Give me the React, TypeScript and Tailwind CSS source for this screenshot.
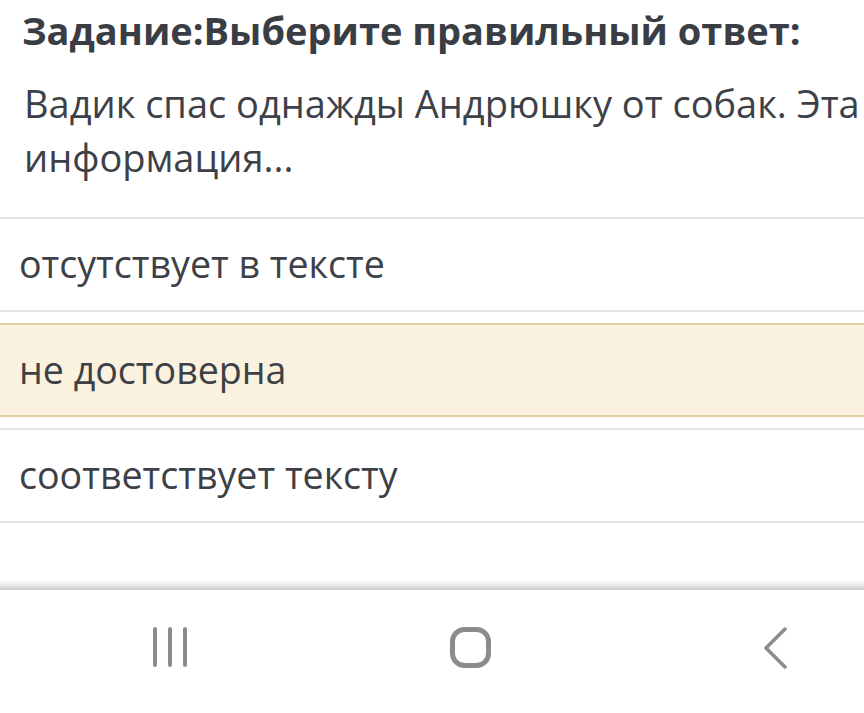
const OPTIONS = [
  { text: "отсутствует в тексте", selected: false },
  { text: "не достоверна", selected: true },
  { text: "соответствует тексту", selected: false },
];

export default function App() {
  return (
    <div className="flex h-[713px] w-[864px] flex-col overflow-hidden bg-white font-['Open_Sans',sans-serif] text-[#3d4147]">
      <div className="px-[22px] pt-[3px]">
        <h1 className="whitespace-nowrap text-[38px] font-bold leading-[54px] text-[#3a3e44]">
          Задание:Выберите правильный ответ:
        </h1>
        <p className="mt-[19px] whitespace-nowrap pl-[2px] text-[38px] leading-[54px]">
          Вадик спас однажды Андрюшку от собак. Эта
          <br />
          информация...
        </p>
      </div>

      <ul className="mt-[33px] flex flex-col gap-[11px]">
        {OPTIONS.map((o) => (
          <li
            key={o.text}
            className={
              o.selected
                ? "border-y-2 border-[#e2d0a3] bg-[#faf2df] px-[19px] pt-[20px] pb-[20px] text-[37.6px] leading-[50px]"
                : "border-y-2 border-[#e4e4e4] bg-white px-[19px] pt-[20px] pb-[21px] text-[37.6px] leading-[50px]"
            }
          >
            {o.text}
          </li>
        ))}
      </ul>

      <div className="flex-1" />

      <div className="h-[8px] bg-gradient-to-b from-white to-[#dcdcdc]" />
      <div className="h-[2px] bg-[#cfcfcf]" />

      <nav className="flex h-[123px] items-start bg-white pt-[37px]">
        <div className="flex w-[340px] justify-center pl-[2px]">
          <svg width="36" height="40" viewBox="0 0 36 40" fill="#8c8c8c">
            <rect x="0" y="0" width="4" height="40" rx="2" />
            <rect x="15" y="0" width="4" height="40" rx="2" />
            <rect x="30" y="0" width="4" height="40" rx="2" />
          </svg>
        </div>
        <div className="flex w-[262px] justify-center">
          <svg width="42" height="42" viewBox="0 0 42 42" fill="none">
            <rect x="2.5" y="2.5" width="36" height="36" rx="12" stroke="#8c8c8c" strokeWidth="5" />
          </svg>
        </div>
        <div className="flex flex-1 justify-start pl-[160px]">
          <svg width="26" height="42" viewBox="0 0 26 42" fill="none">
            <path d="M23 2 L4 21 L23 40" stroke="#8c8c8c" strokeWidth="3.5" strokeLinecap="round" strokeLinejoin="round" />
          </svg>
        </div>
      </nav>
    </div>
  );
}
